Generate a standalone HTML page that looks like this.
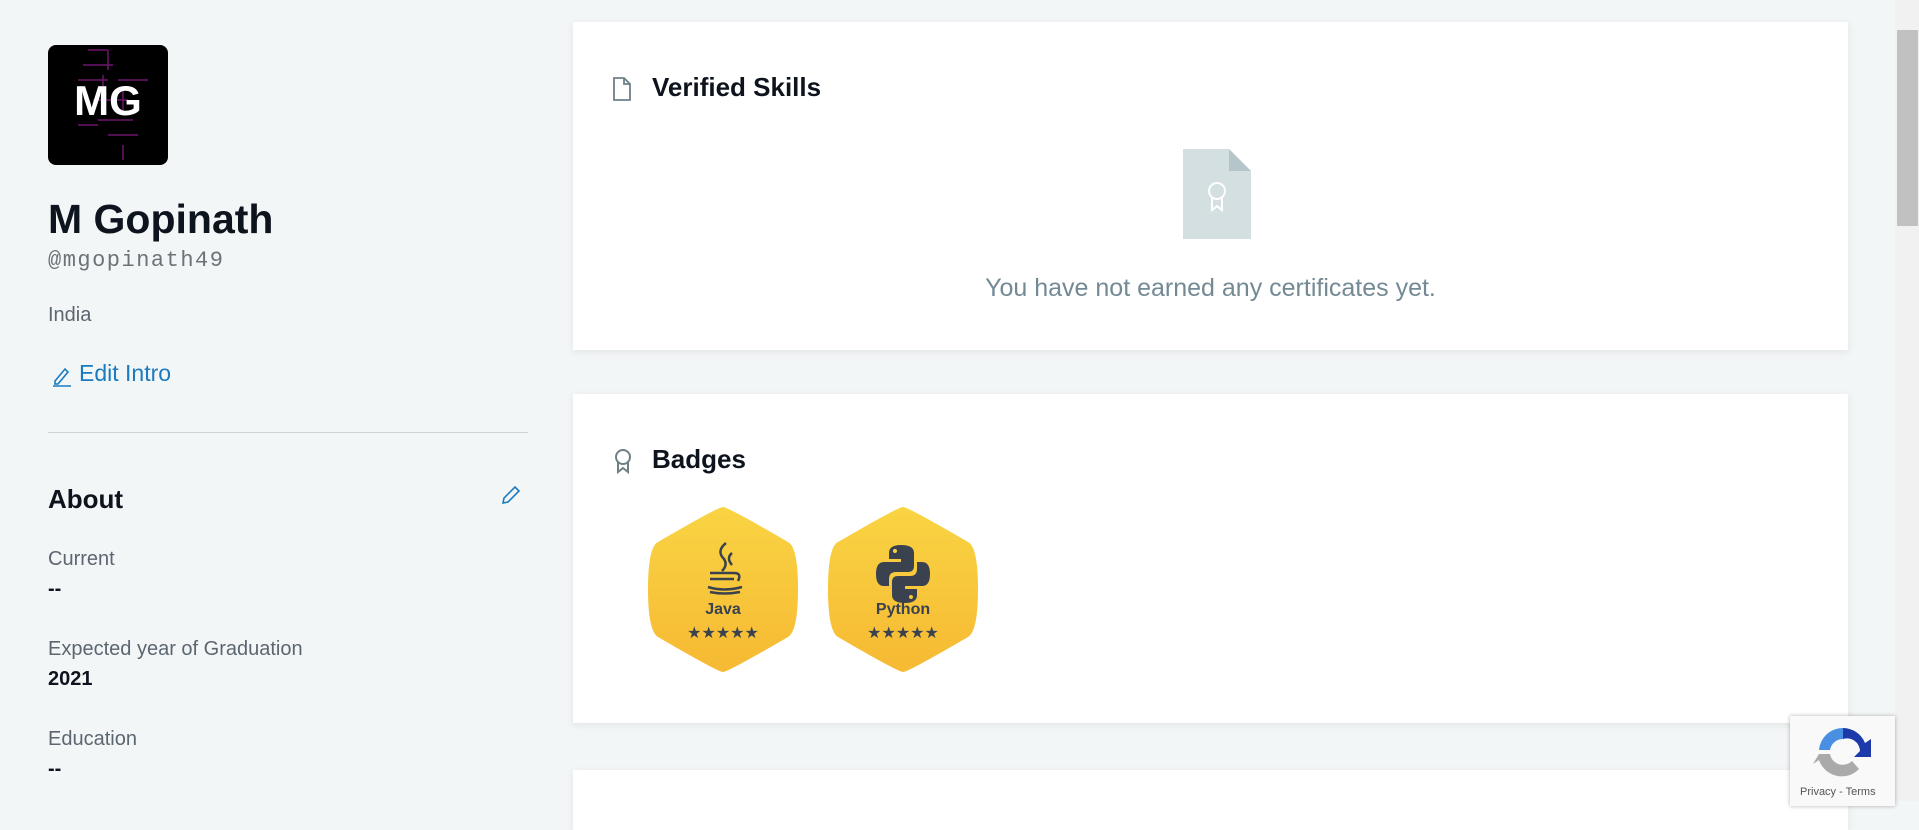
<!DOCTYPE html>
<html><head><style>
body{margin:0;width:1919px;height:801px;background:#f3f6f7;font-family:"Liberation Sans",sans-serif;position:relative;overflow:hidden}
.a{position:absolute}
.card{position:absolute;background:#fff;box-shadow:0 2px 8px rgba(0,0,0,.08)}
.lbl{color:#5c6670;font-size:20px}
.val{color:#0e141e;font-size:20px;font-weight:bold}
</style></head><body>
<div class="a" style="left:48px;top:45px;width:120px;height:120px;border-radius:8px;background:#000;overflow:hidden">
<svg width="120" height="120" style="position:absolute;left:0;top:0"><g stroke="#8a1a8a" stroke-width="1.5" fill="none" opacity=".8"><path d="M40 5h20M60 5v20M35 20h30M30 35h30M55 30v20M70 35h30M45 55h35M75 45v20M50 75h35M60 90h30M75 100v15M30 80h20"/></g></svg>
<div class="a" style="left:0;top:32px;width:120px;text-align:center;color:#fff;font-weight:bold;font-size:42px">MG</div></div>
<div class="a" style="left:48px;top:196px;font-size:41px;font-weight:bold;color:#0e141e">M Gopinath</div>
<div class="a" style="left:48px;top:248px;font-family:'Liberation Mono',monospace;font-size:22px;letter-spacing:1.5px;color:#6b7378">@mgopinath49</div>
<div class="a" style="left:48px;top:304px;font-size:20px;color:#5c6670">India</div>
<svg class="a" style="left:52px;top:364px" width="20" height="24"><path d="M3 17l10-12 3 3-10 12H3z" fill="none" stroke="#1a7bbf" stroke-width="1.6"/><path d="M1 22h18" stroke="#1a7bbf" stroke-width="1.6"/></svg>
<div class="a" style="left:79px;top:360px;font-size:23px;color:#1a7bbf">Edit Intro</div>
<div class="a" style="left:48px;top:432px;width:480px;height:1px;background:#cdd3d6"></div>
<div class="a" style="left:48px;top:484px;font-size:26px;font-weight:bold;color:#0e141e">About</div>
<svg class="a" style="left:500px;top:484px" width="22" height="22"><path d="M3 19l1-5 11-11 4 4-11 11z" fill="none" stroke="#1a7bbf" stroke-width="1.6"/></svg>
<div class="a lbl" style="left:48px;top:548px">Current</div>
<div class="a val" style="left:48px;top:578px">--</div>
<div class="a lbl" style="left:48px;top:638px">Expected year of Graduation</div>
<div class="a val" style="left:48px;top:668px">2021</div>
<div class="a lbl" style="left:48px;top:728px">Education</div>
<div class="a val" style="left:48px;top:758px">--</div>

<div class="card" style="left:573px;top:22px;width:1275px;height:328px">
<svg class="a" style="left:38px;top:54px" width="22" height="26"><path d="M3 2h10l6 6v16H3z M13 2v6h6" fill="none" stroke="#6d8088" stroke-width="1.8"/></svg>
<div class="a" style="left:79px;top:50px;font-size:26px;font-weight:bold;color:#0e141e">Verified Skills</div>
<svg class="a" style="left:610px;top:127px" width="68" height="90"><path d="M0 0h46l22 22v68H0z" fill="#d3dfe1"/><path d="M46 0l22 22H46z" fill="#b6c5c9"/><circle cx="34" cy="42" r="8" fill="none" stroke="#fff" stroke-width="2"/><path d="M29 49v12l5-4 5 4V49" fill="none" stroke="#fff" stroke-width="2"/></svg>
<div class="a" style="left:0;width:1275px;top:252px;text-align:center;font-size:25px;color:#738a94">You have not earned any certificates yet.</div>
</div>

<div class="card" style="left:573px;top:394px;width:1275px;height:329px">
<svg class="a" style="left:40px;top:54px" width="20" height="26"><circle cx="10" cy="9" r="7" fill="none" stroke="#6d8088" stroke-width="2"/><path d="M5 14v10l5-4 5 4V14" fill="none" stroke="#6d8088" stroke-width="2"/></svg>
<div class="a" style="left:79px;top:50px;font-size:26px;font-weight:bold;color:#0e141e">Badges</div>
<svg class="a" style="left:75px;top:113px" width="330" height="165">
<defs><linearGradient id="g" x1="0" y1="0" x2="0" y2="1"><stop offset="0" stop-color="#f9d443"/><stop offset="1" stop-color="#f6b933"/></linearGradient></defs>
<path d="M75 0Q80 0 140 35Q150 40 150 82Q150 124 140 130Q80 165 75 165Q70 165 10 130Q0 124 0 82Q0 40 10 35Q70 0 75 0z" fill="url(#g)"/>
<path transform="translate(180 0)" d="M75 0Q80 0 140 35Q150 40 150 82Q150 124 140 130Q80 165 75 165Q70 165 10 130Q0 124 0 82Q0 40 10 35Q70 0 75 0z" fill="url(#g)"/>
<g fill="none" stroke="#39424e" stroke-width="2.5"><path d="M78 36q-10 8 -2 16q4 6-2 12M84 46q-6 5 0 12"/><path d="M62 66h24q8 0 4 8M62 72h24"/></g>
<path d="M60 80q16 5 34 0M62 85q14 3 30 0" fill="none" stroke="#39424e" stroke-width="2.5"/>
<g fill="#39424e"><path d="M253 38q-12 0-12 8v6h12v3h-17q-8 0-8 12t8 12h5v-7q0-7 7-7h12q6 0 6-6V46q0-8-13-8z"/><path d="M257 96q12 0 12-8v-6h-12v-3h17q8 0 8-12t-8-12h-5v7q0 7-7 7h-12q-6 0-6 6v13q0 8 13 8z"/></g>
<circle cx="247" cy="44" r="2" fill="#f9d443"/><circle cx="263" cy="90" r="2" fill="#f8c43a"/>
<text x="75" y="107" text-anchor="middle" font-family="Liberation Sans" font-weight="bold" font-size="16" fill="#39424e">Java</text>
<text x="255" y="107" text-anchor="middle" font-family="Liberation Sans" font-weight="bold" font-size="16" fill="#39424e">Python</text>
<text x="75" y="131" text-anchor="middle" font-size="16" fill="#39424e" letter-spacing="0">★★★★★</text>
<text x="255" y="131" text-anchor="middle" font-size="16" fill="#39424e" letter-spacing="0">★★★★★</text>
</svg>
</div>

<div class="card" style="left:573px;top:770px;width:1275px;height:60px"></div>

<div class="a" style="left:1895px;top:0;width:24px;height:801px;background:#f1f1f1"></div>
<div class="a" style="left:1897px;top:30px;width:21px;height:196px;background:#c1c1c1"></div>

<div class="a" style="left:1790px;top:716px;width:105px;height:90px;background:#f9f9f9;box-shadow:0 0 4px rgba(0,0,0,.3)">
<svg class="a" style="left:22px;top:8px" width="62" height="56"><path d="M31 4a24 24 0 0 0-24 22h11a13 13 0 0 1 13-11z" fill="#4a90e2"/><path d="M31 4a24 24 0 0 1 22 15l6-4v18H42l6-6a13 13 0 0 0-17-12z" fill="#1c3aa9"/><path d="M7 30h11a13 13 0 0 0 22 7l7 8a24 24 0 0 1-40-9l-6 4z" fill="#aaa"/></svg>
<div class="a" style="left:10px;top:70px;font-size:11px;color:#555">Privacy - Terms</div>
</div>
</body></html>
